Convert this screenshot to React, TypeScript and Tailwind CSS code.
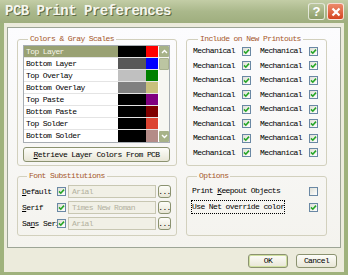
import React from "react";

// --- Data ---
const layers = [
  { name: "Top Layer", gray: "bg-[#000000]", color: "bg-[#ff0000]", selected: true },
  { name: "Bottom Layer", gray: "bg-[#585858]", color: "bg-[#0000ff]" },
  { name: "Top Overlay", gray: "bg-[#c0c0c0]", color: "bg-[#008000]" },
  { name: "Bottom Overlay", gray: "bg-[#808080]", color: "bg-[#c8c07c]" },
  { name: "Top Paste", gray: "bg-[#000000]", color: "bg-[#800080]" },
  { name: "Bottom Paste", gray: "bg-[#000000]", color: "bg-[#800000]" },
  { name: "Top Solder", gray: "bg-[#000000]", color: "bg-[#dc4432]" },
  { name: "Bottom Solder", gray: "bg-[#000000]", color: "bg-[#b48c88]" },
];

const fonts = [
  { label: "Default", key: "D", rest: "efault", value: "Arial" },
  { label: "Serif", key: "S", rest: "erif", value: "Times New Roman" },
  { label: "Sans Serif", key: "", rest: "", value: "Arial" },
];

const mono = "font-['Liberation_Mono',monospace] text-[8px] tracking-[-0.6px]";

// --- Bits ---
function Check({ on = true }: { on?: boolean }) {
  return (
    <span className="flex h-[9px] w-[9px] shrink-0 items-center justify-center border border-[#6a88a4] bg-gradient-to-br from-[#dedfd6] to-white">
      {on && (
        <svg viewBox="0 0 7 7" className="h-[7px] w-[7px]">
          <path d="M1 3.4 L2.8 5.2 L6 1.6" stroke="#26a626" strokeWidth="1.6" fill="none" />
        </svg>
      )}
    </span>
  );
}

function Group({ title, className, children }: { title: string; className?: string; children: React.ReactNode }) {
  return (
    <fieldset className={`rounded-[3px] border border-[#d2d0bd] ${className ?? ""}`}>
      <legend className={`${mono} ml-[5px] px-[2px] leading-[10px] text-[#a6582c]`}>{title}</legend>
      {children}
    </fieldset>
  );
}

function XpButton({ children, className }: { children: React.ReactNode; className?: string }) {
  return (
    <div
      className={`flex items-center justify-center rounded-[3px] border border-[#8b9270] bg-gradient-to-b from-[#fdfdf9] to-[#e8e6d6] text-black ${mono} ${className ?? ""}`}
    >
      {children}
    </div>
  );
}

export default function App() {
  return (
    <div className="flex h-[275px] w-[348px] flex-col bg-[#9fb27c] px-[4px] pb-[3px]">
      {/* Title bar */}
      <div className="-mx-[4px] flex h-[23px] shrink-0 items-center bg-gradient-to-b from-[#c3cda6] via-[#aab88b] to-[#9fae7e] pl-[5px] pr-[4px]">
        <span className="font-['Liberation_Mono',monospace] text-[14px] font-bold tracking-[-0.5px] text-[#f6f6ee] [text-shadow:1px_1px_0_#5f6b44]">
          PCB Print Preferences
        </span>
        <div className="ml-auto flex gap-[2px]">
          <div className="flex h-[17px] w-[17px] items-center justify-center rounded-[3px] border border-white/70 bg-gradient-to-b from-[#bcc79f] to-[#8d9d69] font-['Liberation_Sans',sans-serif] text-[13px] font-bold leading-none text-white">
            ?
          </div>
          <div className="flex h-[17px] w-[17px] items-center justify-center rounded-[3px] border border-white/80 bg-gradient-to-b from-[#ec8a6a] to-[#d4431e]">
            <svg viewBox="0 0 10 10" className="h-[10px] w-[10px]">
              <path d="M1.5 1.5 L8.5 8.5 M8.5 1.5 L1.5 8.5" stroke="white" strokeWidth="2.2" />
            </svg>
          </div>
        </div>
      </div>

      {/* Body */}
      <div className="flex flex-1 flex-col bg-[#ecebdc] px-[3px] pt-[4px]">
        <div className="h-[221px] border border-[#9da596] bg-gradient-to-b from-[#fcfcfe] to-[#f4f3ee] pl-[9px] pt-[6px]">
          <div className="grid grid-cols-[160px_141px] gap-x-[9px] gap-y-[5px]">
            {/* Colors & Gray Scales */}
            <Group title="Colors & Gray Scales" className="pb-[3px] pl-[5px] pr-[6px]">
              <div className="mt-[1px] flex border border-[#a7adb3] bg-white">
                <div className="flex w-[134px] flex-col">
                  {layers.map((l) => (
                    <div key={l.name} className="flex h-[12px] border-b border-[#e4e4e4] last:border-b-0">
                      <div
                        className={`flex w-[94px] items-center pl-[2px] ${mono} ${
                          l.selected ? "bg-[#99a173] text-[#f6f6ea]" : "text-black"
                        }`}
                      >
                        {l.name}
                      </div>
                      <div className={`w-[28px] ${l.gray}`} />
                      <div className={`w-[12px] ${l.color}`} />
                    </div>
                  ))}
                </div>
                <div className="ml-[1px] flex w-[10px] flex-col bg-[#f7f7f2]">
                  <div className="flex h-[11px] items-center justify-center rounded-[1px] bg-[#a7b288]">
                    <svg viewBox="0 0 7 5" className="h-[5px] w-[7px]">
                      <path d="M1 4 L3.5 1.5 L6 4" stroke="white" strokeWidth="1.4" fill="none" />
                    </svg>
                  </div>
                  <div className="mt-[1px] h-[12px] rounded-[1px] border border-[#a9b28f] bg-[#bcc5a2]" />
                  <div className="flex-1" />
                  <div className="flex h-[11px] items-center justify-center rounded-[1px] bg-[#a7b288]">
                    <svg viewBox="0 0 7 5" className="h-[5px] w-[7px]">
                      <path d="M1 1 L3.5 3.5 L6 1" stroke="white" strokeWidth="1.4" fill="none" />
                    </svg>
                  </div>
                </div>
              </div>
              <XpButton className="mt-[4px] h-[15px]">
                <span>
                  <span className="underline">R</span>etrieve Layer Colors From PCB
                </span>
              </XpButton>
            </Group>

            {/* Include on New Printouts */}
            <Group title="Include on New Printouts" className="pl-[6px] pr-[8px]">
              <div className="mt-[0px] flex flex-col">
                {Array.from({ length: 8 }).map((_, i) => (
                  <div key={i} className={`flex h-[14.5px] items-center ${mono} text-black`}>
                    <span className="w-[49px]">Mechanical</span>
                    <Check />
                    <span className="ml-[9px] w-[49px]">Mechanical</span>
                    <Check />
                  </div>
                ))}
              </div>
            </Group>

            {/* Font Substitutions */}
            <Group title="Font Substitutions" className="pb-[5px] pl-[4px] pr-[5px] pt-[4px]">
              <div className="flex flex-col gap-[3px]">
                {fonts.map((f) => (
                  <div key={f.label} className="flex h-[13px] items-center">
                    <span className={`w-[35px] overflow-hidden whitespace-nowrap ${mono} text-black`}>
                      {f.key ? (
                        <>
                          <span className="underline">{f.key}</span>
                          {f.rest}
                        </>
                      ) : (
                        <>
                          Sa<span className="underline">n</span>s Serif
                        </>
                      )}
                    </span>
                    <Check />
                    <div
                      className={`ml-[2px] flex h-[13px] w-[88px] items-center border border-[#c8c7b2] bg-[#f1f0e6] pl-[3px] ${mono} text-[#b3b1a0]`}
                    >
                      {f.value}
                    </div>
                    <XpButton className="ml-[2px] h-[13px] w-[13px]">...</XpButton>
                  </div>
                ))}
              </div>
            </Group>

            {/* Options */}
            <Group title="Options" className="pl-[5px] pr-[8px] pt-[2px]">
              <div className={`flex h-[16px] items-center justify-between ${mono} text-black`}>
                <span>
                  Print <span className="underline">K</span>eepout Objects
                </span>
                <Check on={false} />
              </div>
              <div className={`flex h-[16px] items-center justify-between ${mono} text-black`}>
                <span className="outline-1 outline-dotted outline-black">Use Net override color</span>
                <Check />
              </div>
            </Group>
          </div>
        </div>

        {/* Dialog buttons */}
        <div className="mt-[6px] flex justify-end gap-[8px] pr-[4px]">
          <XpButton className="h-[14px] w-[40px] border-[#6f8a4a] shadow-[inset_0_0_0_1px_#cfe0a0]">OK</XpButton>
          <XpButton className="h-[14px] w-[41px]">Cancel</XpButton>
        </div>
      </div>
    </div>
  );
}
